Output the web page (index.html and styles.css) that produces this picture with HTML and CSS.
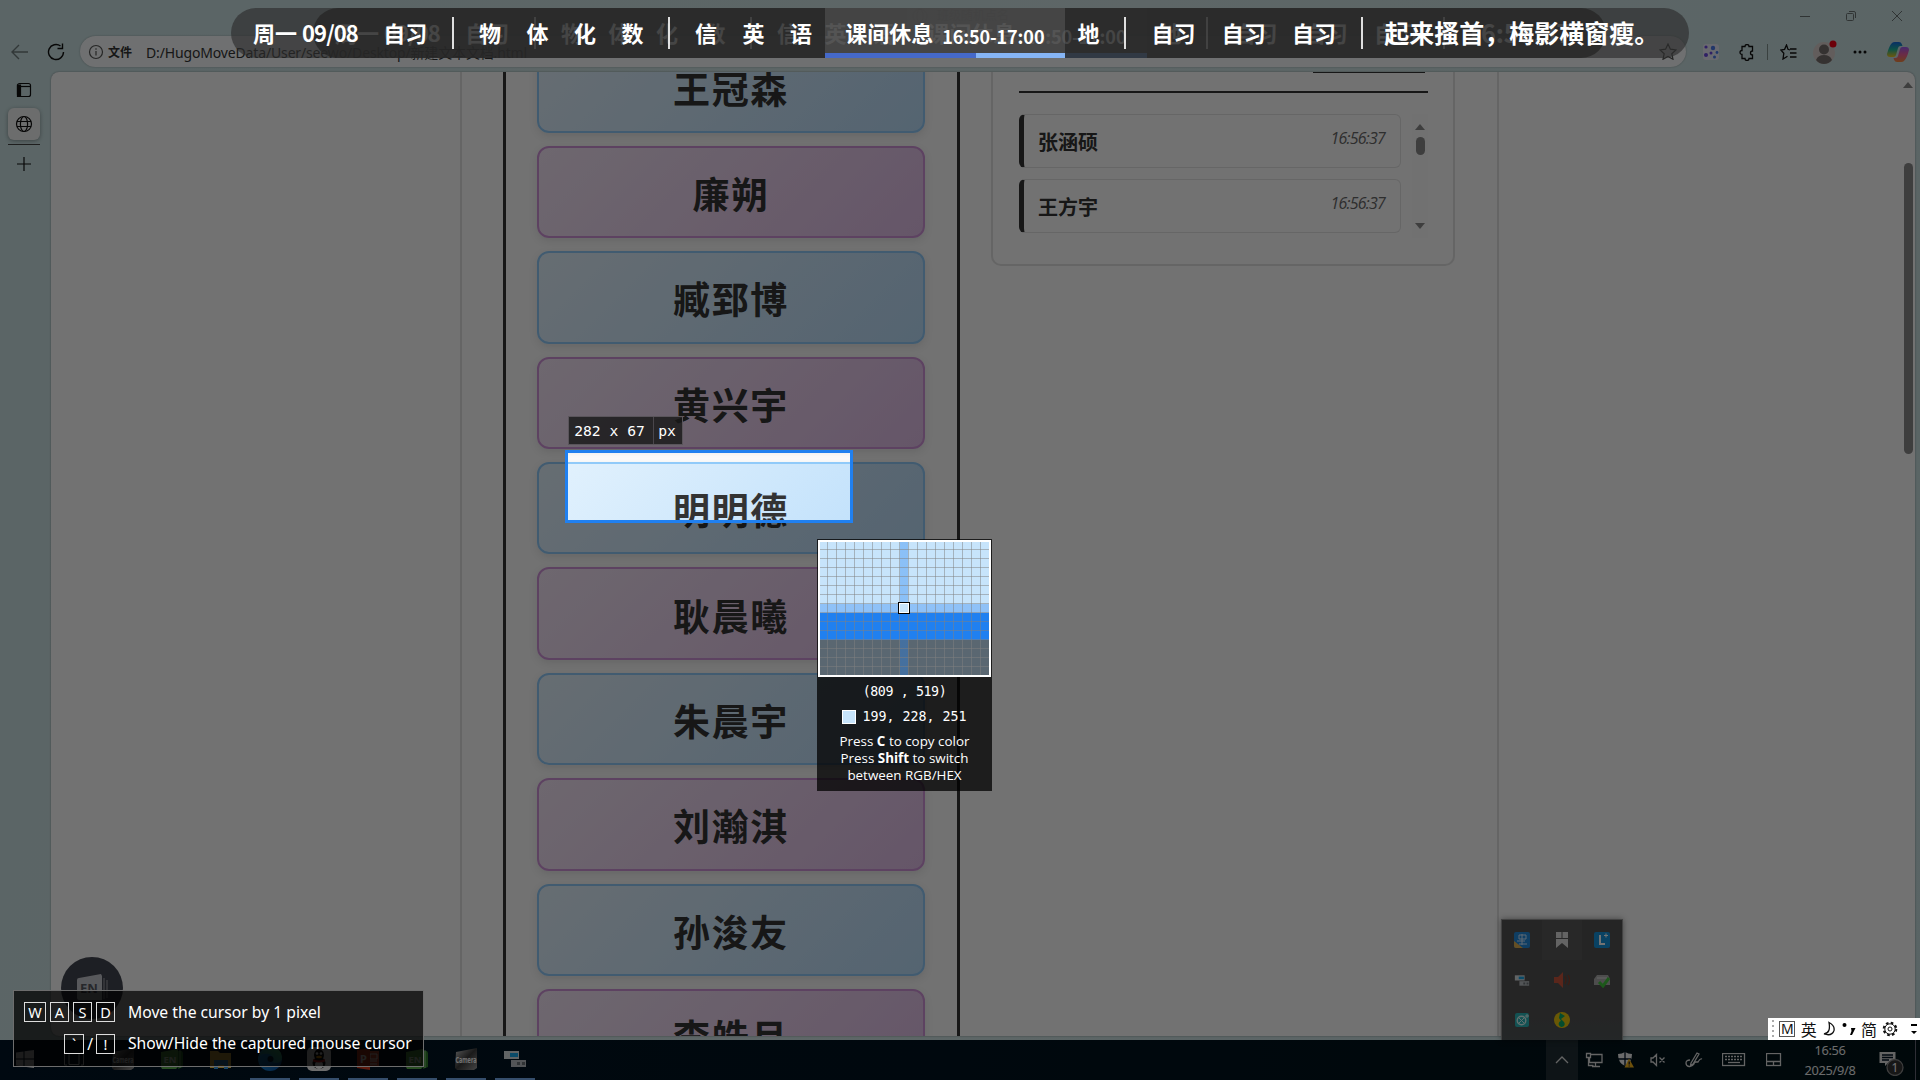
FILE: index.html
```html
<!DOCTYPE html>
<html lang="zh-CN">
<head>
<meta charset="utf-8">
<title>班级随机点名</title>
<link rel="stylesheet" href="styles.css">
</head>
<body>
<svg width="0" height="0" class="defs">
  <defs>
    <linearGradient id="edgeA" x1="0" y1="0" x2="1" y2="1"><stop offset="0" stop-color="#1b9de2"/><stop offset="1" stop-color="#0c4f9c"/></linearGradient>
    <linearGradient id="edgeB" x1="0" y1="1" x2="1" y2="0"><stop offset="0" stop-color="#1473c8"/><stop offset="1" stop-color="#4fd06a"/></linearGradient>
    <linearGradient id="copA" x1="0" y1="0" x2="0" y2="1"><stop offset="0" stop-color="#1668e0"/><stop offset=".5" stop-color="#1fb59a"/><stop offset="1" stop-color="#f2c51e"/></linearGradient>
    <linearGradient id="copB" x1="0" y1="0" x2="0" y2="1"><stop offset="0" stop-color="#9a5cf0"/><stop offset=".5" stop-color="#ec5f9b"/><stop offset="1" stop-color="#f58a3c"/></linearGradient>
    <linearGradient id="cam" x1="0" y1="0" x2="1" y2="1"><stop offset="0" stop-color="#c8c8c8"/><stop offset=".5" stop-color="#3a3a3a"/><stop offset="1" stop-color="#999"/></linearGradient>
    <symbol id="enApp" viewBox="0 0 24 22"><path d="M18 3h4l1 2v14l-5 2z" fill="#2f7a2c"/><path d="M1 4l17-3v18l-2 2H2l-1-2z" fill="#5cae4e"/><path d="M20 2v18" stroke="#9ad48e" stroke-width=".8"/><text x="3.5" y="15" font-size="9.5" font-weight="700" fill="#e8f5e5">EN</text></symbol>
    <symbol id="camApp" viewBox="0 0 24 22"><path d="M2 4l21-4v20l-3 2H3l-2-2z" fill="url(#cam)"/><text x="1.5" y="15" font-size="8.6" font-weight="700" textLength="21" lengthAdjust="spacingAndGlyphs" fill="#fff">Camera</text></symbol>
    <symbol id="winApp" viewBox="0 0 24 20"><path d="M1 2h15v8H1z" fill="#d8dde0"/><path d="M7 4h8v4H7z" fill="#18a7e8"/><path d="M8 11h15v7H8z" fill="#b8bdc0"/><path d="M14 13h3v3h-3zm5 0h3v3h-3z" fill="#6e7478"/></symbol>
  </defs>
</svg>

<div class="desktop">
  <div class="browser">
    <header class="titlebar">
      <div class="page-title"><svg width="16" height="16" viewBox="0 0 16 16" fill="none" stroke="#555"><circle cx="8" cy="8" r="7"/><ellipse cx="8" cy="8" rx="3" ry="7"/></svg>班级随机点名</div>
      <div class="win-controls">
        <svg width="12" height="12"><path d="M1 6.5h10"/></svg>
        <svg width="12" height="12"><rect x="1.5" y="3.5" width="7" height="7" rx="1"/><path d="M4 1.5h5q1.500 0 1.500 1.500v5"/></svg>
        <svg width="12" height="12"><path d="M1 1l10 10M11 1L1 11"/></svg>
      </div>
    </header>
    <div class="toolbar">
      <svg class="back" width="18" height="16" viewBox="0 0 18 16"><path d="M17 8H1.500M8 1L1 8l7 7"/></svg>
      <svg class="reload" width="18" height="18" viewBox="0 0 18 18"><path d="M16.500 9A7.500 7.500 0 1 1 13.500 3M15.500 0.500v5h-5"/></svg>
      <div class="address">
        <svg width="16" height="16" viewBox="0 0 16 16"><circle cx="8" cy="8" r="6.5"/><path d="M8 7v4.500M8 4.300v1.400"/></svg>
        <b>文件</b><span class="url">D:/HugoMoveData/User/seewo/Desktop/新建文本文档.html</span>
        <svg class="fav" width="18" height="17" viewBox="0 0 18 17"><path d="M9 1l2.400 5.200 5.600.7-4.200 3.800 1.200 5.600L9 13.500l-5 2.800 1.200-5.600L1 6.900l5.600-.7z"/></svg>
      </div>
      <div class="tools">
        <svg class="t-ext" width="16" height="16"><rect width="16" height="16" rx="3" fill="#e8e8f5"/><g fill="#6a48e0"><circle cx="3" cy="3" r="1.600"/><circle cx="3" cy="11" r="2"/><circle cx="8" cy="9" r="1.500"/></g><g fill="#4a78e8"><circle cx="10" cy="4" r="2.200"/><circle cx="14" cy="8.500" r="1.400"/><circle cx="11.500" cy="13" r="1.500"/></g></svg>
        <svg class="t-puz" width="16" height="17" viewBox="0 0 16 17"><path d="M3 2.500h3a2 2 0 0 1 4 0h3.500v4.500a2 2 0 1 0 0 4v3.500H10a2 2 0 0 1-4 0H3v-4a2 2 0 1 1 0-4z"/></svg>
        <i class="t-div"></i>
        <svg class="t-fav" width="17" height="16" viewBox="0 0 17 16"><path d="M10 6L8 5.300 6.500 1 4.600 5.300 0.800 6l3 3.300L3 15l4.500-2.800M10 5h6.500M10 9h6.500M10 13h6.500"/></svg>
        <svg class="t-av" width="24" height="24" viewBox="0 0 24 24"><circle cx="11" cy="13" r="11" fill="#d9cfcc"/><circle cx="11" cy="9.500" r="5" fill="#77706e"/><path d="M3 20q2-5 8-5t8 5q-3 4-8 4t-8-4z" fill="#77706e"/><circle cx="20" cy="4" r="3.500" fill="#f00014"/></svg>
        <svg class="t-dots" width="14" height="4"><circle cx="2" cy="2" r="1.500"/><circle cx="7" cy="2" r="1.500"/><circle cx="12" cy="2" r="1.500"/></svg>
        <svg class="t-cop" width="22" height="20" viewBox="0 0 22 20"><path d="M5 1q1-1 3-1h4q2 0 2.800 2l.7 2h-2q-2 0-2.500 2l-2 7q-.6 2-2.500 2H3q-3 0-3-3 2-8 5-11z" fill="url(#copA)"/><path d="M17 19q-1 1-3 1h-4q-2 0-2.800-2l-.7-2h2q2 0 2.500-2l2-7q.6-2 2.500-2H19q3 0 3 3-2 8-5 11z" fill="url(#copB)"/></svg>
      </div>
    </div>
    <div class="browser-body">
      <aside class="side">
        <svg width="16" height="16" viewBox="0 0 16 16"><rect x="1.500" y="1.500" width="13" height="13" rx="2"/><path d="M5 4.500h9.500"/><path d="M1.500 3h3v11.500h-3z" fill="#111"/></svg>
        <div class="tab"><svg width="18" height="18" viewBox="0 0 18 18"><circle cx="9" cy="9" r="7.500"/><ellipse cx="9" cy="9" rx="3.600" ry="7.500"/><path d="M2 6.500h14M2 11.500h14"/></svg></div>
        <i></i>
        <svg width="16" height="16" viewBox="0 0 16 16"><path d="M8 1v14M1 8h14"/></svg>
      </aside>
      <main class="viewport">
        <div class="container">
          <section class="names">
            <div class="name blue">王冠森</div>
            <div class="name pink">廉朔</div>
            <div class="name blue">臧郅博</div>
            <div class="name pink">黄兴宇</div>
            <div class="name blue">明明德</div>
            <div class="name pink">耿晨曦</div>
            <div class="name blue">朱晨宇</div>
            <div class="name pink">刘瀚淇</div>
            <div class="name blue">孙浚友</div>
            <div class="name pink">李皓月</div>
          </section>
          <section class="history">
            <div class="history-head"><i></i></div>
            <div class="history-body">
              <div class="records">
                <div class="record"><b>张涵硕</b><em>16:56:37</em></div>
                <div class="record"><b>王方宇</b><em>16:56:37</em></div>
              </div>
              <div class="mini-scroll"><i class="up"></i><i class="thumb"></i><i class="down"></i></div>
            </div>
          </section>
        </div>
        <div class="page-scroll"><i class="up"></i><i class="thumb"></i></div>
      </main>
    </div>
  </div>

  <footer class="taskbar">
    <div class="apps">
      <span><svg width="18" height="18" viewBox="0 0 18 18"><path d="M0 2.500L7.500 1.500v7H0zM8.500 1.300L18 0v8.500H8.500zM0 9.500h7.500v7L0 15.500zM8.500 9.500H18V18l-9.500-1.300z" fill="#ddd"/></svg></span>
      <span><svg width="20" height="14" viewBox="0 0 20 14" fill="none" stroke="#ddd"><path d="M5 1.500h10v11H5zM3 1H.5v12H3M17 1h2.500v12H17"/></svg></span>
      <span><svg width="24" height="22"><use href="#camApp"/></svg></span>
      <span><svg width="24" height="22"><use href="#enApp"/></svg></span>
      <span><svg width="22" height="19" viewBox="0 0 22 19"><path d="M0 1h8l2 2h11v15H0z" fill="#f5c84c"/><path d="M4 10h14v9h-4v-4H8v4H4z" fill="#3a9be0"/></svg></span>
      <span class="open"><svg width="24" height="24" viewBox="0 0 24 24"><circle cx="12" cy="12" r="12" fill="url(#edgeA)"/><path d="M1 9Q4 0 13 0q10 1 11 10 0 6-6 6-4 0-4-2 2-5-3-7-6-1-10 2z" fill="url(#edgeB)"/><circle cx="12.500" cy="12" r="3" fill="#06233c"/></svg></span>
      <span class="open"><svg width="24" height="24" viewBox="0 0 24 24"><rect width="24" height="24" rx="5" fill="#f2f2f2"/><ellipse cx="12" cy="16" rx="6.500" ry="6" fill="#111"/><ellipse cx="12" cy="8" rx="5" ry="6" fill="#111"/><ellipse cx="12" cy="18" rx="4" ry="4" fill="#fff"/><path d="M6 12q6 3 12 0v2.500q-6 2-12 0z" fill="#e02020"/><ellipse cx="12" cy="10" rx="3" ry="1.200" fill="#f5a200"/><circle cx="10" cy="6.500" r="1.300" fill="#fff"/><circle cx="14" cy="6.500" r="1.300" fill="#fff"/></svg></span>
      <span class="open"><svg width="24" height="22" viewBox="0 0 24 22"><path d="M12 3h11v16H12z" fill="#e8593a"/><path d="M14 6h7v5h-7zM14 13h7M14 16h7" stroke="#fff" fill="none"/><path d="M1 2l13-2v22L1 20z" fill="#d13b1e"/><text x="4" y="15" font-size="11" font-weight="700" fill="#fff">P</text></svg></span>
      <span class="open"><svg width="24" height="22"><use href="#enApp"/></svg></span>
      <span class="open"><svg width="24" height="22"><use href="#camApp"/></svg></span>
      <span class="open"><svg width="24" height="20"><use href="#winApp"/></svg></span>
    </div>
    <div class="tray">
      <span class="w32 on"><svg width="14" height="8" viewBox="0 0 14 8"><path d="M1 7l6-6 6 6"/></svg></span>
      <span class="w32"><svg width="18" height="16" viewBox="0 0 18 16"><path d="M6 2.500h11v8H4.500V6M1.500 1.500h4v4h-4zM3.500 5.500v8h5M10.500 10.500v4M7 14.500h8"/></svg></span>
      <span class="w32"><svg width="18" height="18" viewBox="0 0 18 18"><path d="M8 1q3 2 7 2 0 9-7 12-7-3-7-12 4 0 7-2z" fill="#eee" stroke="none"/><path d="M8 1v14M1 8h13" stroke="#001222"/><path d="M12 7.500l5 9H7.500z" fill="#f2b21a" stroke="none"/><path d="M12.200 10.500v3M12.200 14.500v1" stroke="#222"/></svg></span>
      <span class="w32"><svg width="16" height="14" viewBox="0 0 16 14"><path d="M1 5h2l3.500-3.500v11L3 9H1zM9.500 4.500l5 5M14.500 4.500l-5 5"/></svg></span>
      <span class="w40"><svg width="18" height="16" viewBox="0 0 18 16"><path d="M6 11L12 1l2 1-6 10-2.500 1.500zM5 8Q1 8 1 11t3 3.500 5-2.500q0-2 2-2t2 0q2-4 4-3"/></svg></span>
      <span class="w40"><svg width="24" height="14" viewBox="0 0 24 14"><rect x=".5" y=".5" width="22" height="12"/><path d="M3 3.500h17M3 6.500h17" stroke-dasharray="2 1"/><path d="M6 9.500h12"/></svg></span>
      <span class="w40"><svg width="16" height="14" viewBox="0 0 16 14"><rect x=".5" y=".5" width="14" height="12"/><path d="M.5 8.500h14M7.500 8.500v4"/></svg></span>
      <span class="clock"><b>16:56</b><b>2025/9/8</b></span>
      <span class="notice"><svg width="26" height="26" viewBox="0 0 26 26"><path d="M1.500 2h16v11H10l-3 3v-3H1.500z" fill="#ddd" stroke="none"/><path d="M4 5h11M4 7.500h11M4 10h7" stroke="#001222"/><circle cx="17" cy="17.500" r="8" fill="#333" stroke="#888"/><text x="17" y="22" font-size="12" text-anchor="middle" fill="#fff" stroke="none">1</text></svg></span>
      <i class="peek"></i>
    </div>
  </footer>

  <div class="popup">
    <span><svg width="16" height="16"><rect width="16" height="16" rx="2" fill="#2389dc"/><path d="M0 9l9 7H2q-2 0-2-2z" fill="#e0b050"/><path d="M5 3h7v4H5zM3 9h8M8 2v11M5 12h8" fill="none" stroke="#cfe8ff"/></svg></span>
    <span class="hot"><svg width="12" height="16"><path d="M0 0h5.500v6H0zM6.500 0H12v6H6.500zM0 7h12v9l-6-5-6 5z" fill="#ddd"/></svg></span>
    <span><svg width="16" height="16"><rect width="16" height="16" rx="2" fill="#1593dc"/><path d="M6 3v9h5" stroke="#fff" stroke-width="2" fill="none"/><path d="M10 3.500h4M12 1.500v4" stroke="#fff"/></svg></span>
    <span><svg width="16" height="13"><use href="#winApp"/></svg></span>
    <span><svg width="16" height="16"><path d="M0 5h4l5-5v16l-5-5H0z" fill="#c8553c"/><path d="M11 4q2 4 0 8M14 3q3 5 0 10" fill="none" stroke="#82402f" stroke-width="1.300"/></svg></span>
    <span><svg width="16" height="16"><path d="M3 3h11l2 4v6H0V7z" fill="#aaa"/><path d="M3 6h10" stroke="#ddd"/><path d="M5 10l4 4 6-8" fill="none" stroke="#42c33c" stroke-width="3"/></svg></span>
    <span><svg width="14" height="14"><rect width="14" height="14" rx="2" fill="#2ab6b8"/><circle cx="6.500" cy="7.500" r="4.300" fill="none" stroke="#d8f5f3" stroke-width="1.400"/><path d="M4 5l5 5M9 5l-5 5M12 1v4M10 3h4" stroke="#d8f5f3"/></svg></span>
    <span><svg width="16" height="16"><circle cx="8" cy="8" r="8" fill="#e9c40c"/><path d="M6 1l5 3-4 3 3 3a3 3 0 1 1-3-1L5 6z" fill="#0ba866"/></svg></span>
  </div>

  <div class="en-bubble"><svg width="32" height="28" viewBox="0 0 32 28"><path d="M1 6Q1 4 3 4L25 0l1 2v24H3q-2 0-2-2z" fill="#c4c6cc"/><path d="M28 4v21M31 6v18" stroke="#a0a3aa"/><text x="4" y="19" font-size="13" font-weight="700" fill="#55575f">EN</text></svg></div>

  <div class="classbar shadowed">
    <div class="date">周一 <span>09/08</span></div><div class="study">自习</div><i></i>
    <div class="sub">物</div><div class="sub">体</div><div class="sub">化</div><div class="sub">数</div><i></i>
    <div class="sub">信</div><div class="sub">英</div><div class="sub">语</div>
    <div class="now">课间休息<small>16:50-17:00</small></div>
    <div class="sub">地</div><i></i>
    <div class="study">自习</div><div class="study">自习</div><div class="study">自习</div><i></i>
    <div class="verse">16:56:37</div>
  </div>
</div>

<div class="selection"></div>

<div class="classbar">
  <div class="date">周一 <span>09/08</span></div><div class="study">自习</div><i></i>
  <div class="sub">物</div><div class="sub">体</div><div class="sub">化</div><div class="sub">数</div><i></i>
  <div class="sub">信</div><div class="sub">英</div><div class="sub">语</div>
  <div class="now">课间休息<small>16:50-17:00</small></div>
  <div class="sub">地</div><i></i>
  <div class="study">自习</div><div class="study">自习</div><div class="study">自习</div><i></i>
  <div class="verse">起来搔首，梅影横窗瘦。</div>
</div>

<div class="size-label"><span>282 x 67</span><span>px</span></div>

<div class="picker">
  <div class="lens"><i></i></div>
  <p class="mono pos">(809 , 519)</p>
  <p class="mono rgb"><i></i>199, 228, 251</p>
  <p class="help">Press <b>C</b> to copy color<br>Press <b>Shift</b> to switch<br>between RGB/HEX</p>
</div>

<div class="hints">
  <div class="keys"><kbd class="wide">W</kbd><kbd>A</kbd><kbd>S</kbd><kbd>D</kbd></div><div class="hint">Move the cursor by 1 pixel</div>
  <div class="keys tight"><kbd class="tick">`</kbd><span>/</span><kbd>!</kbd></div><div class="hint">Show/Hide the captured mouse cursor</div>
</div>

<div class="ime">
  <i class="grip"></i><b>M</b><span>英</span>
  <svg width="14" height="16" viewBox="0 0 14 16"><path d="M7 1.500q6 3 5 8-2 6-10 3.500 7-1 5-11.500z" fill="none" stroke="#111" stroke-width="1.300"/></svg>
  <svg width="14" height="14" viewBox="0 0 14 14"><circle cx="2.500" cy="3" r="2"/><path d="M9 6h4.500l-3.500 7H8l1.500-4z"/></svg>
  <span>简</span>
  <svg width="16" height="16" viewBox="0 0 16 16" fill="none" stroke="#111"><circle cx="8" cy="8" r="6.300" stroke-width="2" stroke-dasharray="2.600 2.350"/><circle cx="8" cy="8" r="5.200"/><circle cx="8" cy="8" r="2"/></svg>
  <svg class="more" width="8" height="12" viewBox="0 0 8 12"><path d="M1 1h6v2H1zM1 8h6l-3 3z"/></svg>
</div>
</body>
</html>
```
FILE: styles.css
```css
* { box-sizing: border-box; }
body {
  margin: 0;
  width: 1920px;
  height: 1080px;
  overflow: hidden;
  position: relative;
  background: #000;
  font-family: "Noto Sans", "Noto Sans CJK SC", sans-serif;
}
svg { flex: none; }
.defs { position: absolute; }
.desktop {
  position: relative;
  display: grid;
  grid-template-rows: 1040px 40px;
  height: 1080px;
}

/* browser window */
.browser {
  display: grid;
  grid-template-rows: 36px 36px 1fr;
  background: linear-gradient(110deg, #c9e0e2, #d0e3e4 50%, #c6dee0);
}
.titlebar { display: flex; align-items: flex-start; padding: 8px 17px 0 912px; }
.page-title { display: flex; gap: 9px; align-items: center; font-size: 12px; line-height: 16px; color: #444; }
.win-controls { margin-left: auto; padding-top: 2px; display: flex; gap: 34px; }
.win-controls svg { fill: none; stroke: #6a7474; }
.toolbar { display: flex; align-items: flex-start; padding-left: 11px; }
.back, .reload { fill: none; stroke: #111; stroke-width: 1.4; margin-top: 8px; }
.back { stroke: #6f7c7d; }
.reload { margin: 7px 0 0 18px; }
.address {
  display: flex;
  align-items: center;
  width: 1606px;
  height: 31px;
  margin-left: 15px;
  padding: 0 9px 0 8px;
  border-radius: 16px;
  background: #f5f9fa;
  box-shadow: 0 0 2px rgba(0,0,0,.3);
  color: #333;
}
.address svg { fill: none; stroke: #555; stroke-width: 1.2; }
.address b { font-size: 12px; margin-left: 4px; }
.url { font-size: 14px; margin-left: 14px; letter-spacing: -.15px; }
.address .fav { margin-left: auto; }
.tools { display: flex; align-items: center; height: 32px; margin-left: 17px; }
.tools svg { fill: none; stroke: #111; stroke-width: 1.3; }
.tools .t-ext, .tools .t-av, .tools .t-cop { stroke: none; }
.t-puz { margin-left: 20px; }
.t-div { width: 1px; height: 16px; margin-left: 12px; background: #82908f; }
.t-fav { margin-left: 12px; }
.t-av { margin-left: 16px; }
.tools .t-dots { margin-left: 16px; fill: #111; stroke: none; }
.t-cop { margin-left: 20px; }
.browser-body { display: grid; grid-template-columns: 51px 1864px; }
.side { display: flex; flex-direction: column; align-items: center; padding: 10px 4px 0 0; }
.side svg { fill: none; stroke: #111; stroke-width: 1.2; }
.tab {
  display: flex;
  align-items: center;
  justify-content: center;
  width: 32px;
  height: 32px;
  margin-top: 10px;
  border-radius: 6px;
  background: #f0f2f2;
  box-shadow: 0 1px 4px rgba(0,0,0,.35);
}
.side i { width: 32px; height: 1px; margin: 4px 0 11px; background: #444; }
.viewport {
  display: flex;
  height: 964px;
  padding-left: 409px;
  border-radius: 8px;
  overflow: hidden;
  background: #fcfcfc;
  box-shadow: 0 0 2px rgba(0,0,0,.4);
}

/* roll-call page */
.container {
  display: flex;
  align-items: flex-start;
  width: 1039px;
  height: 964px;
  padding-left: 41px;
  border: solid #e0e0e0;
  border-width: 0 2px;
}
.names {
  width: 457px;
  height: 1100px;
  margin-top: -62px;
  padding: 30.400px 31px 0;
  border: solid #333;
  border-width: 0 3px;
  display: flex;
  flex-direction: column;
  gap: 13px;
}
.name {
  flex: none;
  height: 92.400px;
  width: 388px;
  padding-top: 2px;
  border: 2px solid;
  border-radius: 12px;
  display: flex;
  align-items: center;
  justify-content: center;
  font: 700 37px "Noto Sans CJK SC", sans-serif;
  letter-spacing: 1.600px;
  color: #333;
  box-shadow: 0 3px 8px rgba(0,0,0,.1);
}
.blue { background: linear-gradient(135deg, #e3f2fd, #bbdefb); border-color: #90caf9; }
.pink { background: linear-gradient(135deg, #f3e5f5, #e1bee7); border-color: #ce93d8; }
.history {
  width: 464px;
  height: 194px;
  margin-left: 31px;
  padding: 0 25px 0 26px;
  border: 2px solid #e0e0e0;
  border-top: 0;
  border-radius: 0 0 10px 10px;
}
.history-head { height: 21px; border-bottom: 2px solid #333; display: flex; justify-content: flex-end; padding-right: 3px; }
.history-head i { width: 112px; height: 1px; background: #333; }
.history-body { display: flex; justify-content: space-between; padding-top: 21px; }
.records { display: flex; flex-direction: column; gap: 11px; width: 382px; }
.record {
  display: flex;
  justify-content: space-between;
  align-items: flex-start;
  height: 54px;
  padding: 13px 15px 0 14px;
  border: 1px solid #e2e2e2;
  border-left: 5px solid #333;
  border-radius: 6px;
}
.record b { font: 700 20px/28px "Noto Sans CJK SC", sans-serif; color: #333; }
.record em { font: italic 16px/20px "Open Sans", sans-serif; color: #666; letter-spacing: -.8px; }
.mini-scroll { display: flex; flex-direction: column; align-items: center; width: 16px; height: 124px; padding: 10px 0 9px; background: #fafafa; }
.up, .down { border: 5px solid transparent; border-top: 0; border-bottom: 6px solid #8a8a8a; }
.down { border-bottom: 0; border-top: 6px solid #8a8a8a; margin-top: auto; }
.mini-scroll .thumb { width: 9px; height: 18px; margin-top: 7px; border-radius: 5px; background: #8a8a8a; }
.page-scroll { display: flex; flex-direction: column; align-items: center; width: 14px; margin-left: auto; padding-top: 10px; }
.page-scroll .thumb { width: 9px; height: 291px; margin-top: 75px; border-radius: 5px; background: #8a8a8a; }

/* taskbar */
.taskbar { display: flex; justify-content: space-between; background: linear-gradient(90deg, #001426, #00131f 50%, #001218); }
.apps { display: flex; gap: 9px; padding-left: 5px; }
.apps span { display: flex; width: 40px; height: 40px; align-items: center; justify-content: center; border-bottom: 2px solid transparent; }
.apps .open { border-color: #77aef0; }
.tray { display: flex; align-items: stretch; }
.tray span { display: flex; align-items: center; justify-content: center; }
.tray svg { fill: none; stroke: #ddd; stroke-width: 1.3; }
.w32 { width: 32px; }
.w40 { width: 40px; }
.on { background: #1f2d33; }
.tray .clock { width: 72px; flex-direction: column; font: 12.800px/20px "Noto Sans", sans-serif; color: #eee; }
.clock b { font-weight: 400; letter-spacing: -.3px; }
.tray .notice { width: 48px; padding: 6px 0 0 2px; }
.peek { width: 1px; margin: 0 4px 0 1px; background: #667; }

.popup {
  position: absolute;
  left: 1501px;
  top: 919px;
  display: grid;
  grid-template-columns: repeat(3, 40px);
  grid-auto-rows: 40px;
  width: 122px;
  height: 121px;
  border: 1px solid #929292;
  border-bottom: 0;
  background: linear-gradient(#525252 80%, #505759);
  box-shadow: 0 0 6px rgba(0,0,0,.4);
}
.popup span { display: flex; align-items: center; justify-content: center; }
.popup .hot { background: #5a5a5a; }
.en-bubble {
  position: absolute;
  left: 61px;
  top: 957px;
  width: 62px;
  height: 62px;
  border-radius: 50%;
  background: #424550;
  padding: 17px 15px;
}

/* class schedule strip */
.classbar {
  position: absolute;
  left: 231px;
  top: 8px;
  display: flex;
  width: 1458px;
  height: 50px;
  border-radius: 25px;
  overflow: hidden;
  background: rgba(44,44,44,.64);
  color: #fff;
  font: 700 22px/48px "Noto Sans CJK SC", sans-serif;
  text-align: center;
  white-space: nowrap;
}
.classbar.shadowed { left: 313px; width: 1293px; background: rgba(62,62,62,.78); }
.classbar > * { flex: none; }
.date { width: 139px; padding-left: 22px; text-align: left; }
.date span { letter-spacing: -.9px; }
.study { width: 70.300px; }
.sub { width: 47.500px; }
.classbar > i { width: 2px; height: 32px; margin: 9px 12px 0; background: rgba(255,255,255,.85); }
.now {
  width: 240px;
  height: 50px;
  display: flex;
  justify-content: center;
  gap: 9px;
  background: linear-gradient(90deg, #4569c9 151px, #86b5f5 151px) 0 45px / 100% 5px no-repeat, rgba(110,110,110,.38);
}
.now small { font-size: 18px; line-height: 56px; letter-spacing: -.1px; }
.verse { font-size: 25px; padding-left: 9px; }
.classbar > .verse { line-height: 49px; }

/* capture overlay */
.selection {
  position: absolute;
  left: 565px;
  top: 450px;
  width: 288px;
  height: 73px;
  border: 3px solid #2080f0;
  box-shadow: 0 0 0 2000px rgba(0,0,0,.55);
}
.size-label {
  position: absolute;
  left: 568px;
  top: 416px;
  display: flex;
  height: 29px;
  border: 1px solid #5a555b;
  background: rgba(25,25,25,.82);
  color: #fff;
  font: 14.700px/28px "DejaVu Sans Mono", monospace;
}
.size-label span { width: 84px; padding-right: 3px; text-align: center; white-space: nowrap; }
.size-label span + span { width: 29px; padding: 0 2px 0 0; border-left: 1px solid #4a464b; }
.picker {
  position: absolute;
  left: 817px;
  top: 539px;
  width: 175px;
  height: 252px;
  padding: 1px;
  background: rgba(0,0,0,.74);
  color: #fff;
  text-align: center;
}
.lens {
  width: 173px;
  height: 137px;
  border: 2px solid #fff;
  padding: 60px 0 0 78px;
  background:
    repeating-linear-gradient(90deg, transparent 0 8px, rgba(128,128,128,.5) 8px 9px) -1px 0 / 171px 133px,
    repeating-linear-gradient(transparent 0 8px, rgba(128,128,128,.5) 8px 9px) 0 -1px / 169px 135px,
    linear-gradient(rgba(32,128,240,.36) 0 0) 80px 0 / 8px 133px no-repeat,
    linear-gradient(#c7e4fb 62px, #8fc1f7 62px 71px, #2080f0 71px 98px, #5a6771 98px);
  background-origin: padding-box;
}
.lens i { display: block; width: 12px; height: 12px; background: #c7e4fb; border: 1px solid #000; box-shadow: inset 0 0 0 1px #fff; }
.picker p { margin: 0; }
.mono { font: 13.300px/25px "DejaVu Sans Mono", monospace; }
.pos { padding-top: 2px; letter-spacing: -.4px; }
.picker .rgb { display: flex; align-items: center; justify-content: center; gap: 6px; }
.rgb i { width: 14px; height: 14px; background: #c7e4fb; border: 1px solid #fff; }
.picker .help { font: 13.400px/17px "Open Sans", sans-serif; padding-top: 4px; }
.hints {
  position: absolute;
  left: 13px;
  top: 990px;
  width: 411px;
  height: 77px;
  padding: 10px 0 0 10px;
  display: grid;
  grid-template-columns: 91px 1fr;
  grid-template-rows: 31px 31px;
  column-gap: 13px;
  border: 1px solid #6d6d6d;
  background: rgba(0,0,0,.72);
  color: #fff;
  font: 15.700px/22px "Noto Sans", sans-serif;
}
.keys { display: flex; gap: 4px; justify-content: flex-end; }
.keys.tight { gap: 3px; padding-top: 1px; }
.keys kbd { width: 19px; height: 20px; border: 1px solid #ddd; font: 14.500px/18px "Noto Sans", sans-serif; text-align: center; margin-top: 1px; }
.keys .wide { width: 22px; }
.keys .tick { width: 20px; }
.hint { white-space: nowrap; }
.ime {
  position: absolute;
  left: 1768px;
  top: 1018px;
  width: 152px;
  height: 22px;
  display: flex;
  align-items: center;
  padding-left: 4px;
  gap: 5.400px;
  background: #fff;
  color: #111;
  font: 16px/21px "Noto Sans CJK SC", sans-serif;
}
.grip { width: 2px; height: 18px; background: repeating-linear-gradient(#aaa 0 2px, transparent 2px 5px); }
.ime b { width: 16px; height: 16px; border: 1px solid #555; font: 14px/14px "Noto Sans", sans-serif; text-align: center; }
.ime .more { margin-left: 6px; }
```
